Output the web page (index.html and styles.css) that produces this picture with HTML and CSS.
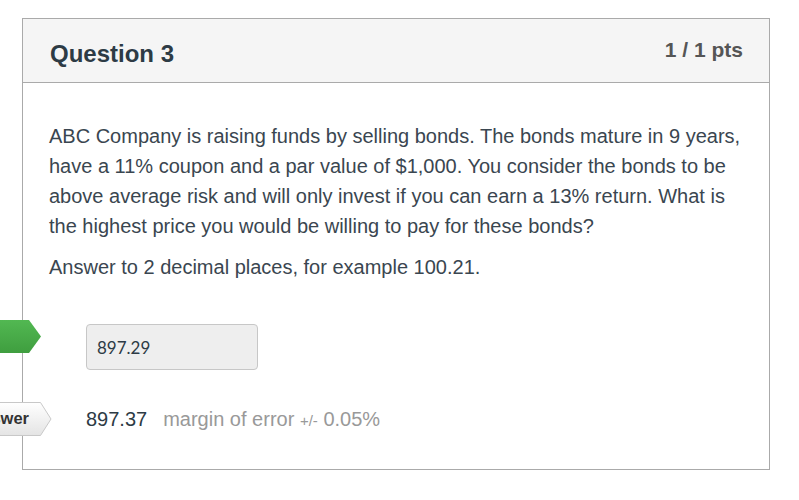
FILE: index.html
```html
<!DOCTYPE html>
<html>
<head>
<meta charset="utf-8">
<link rel="stylesheet" href="styles.css">
</head>
<body>
<div class="card">
  <div class="card-header">
    <h2 class="title">Question 3</h2>
    <div class="pts">1 / 1 pts</div>
  </div>
  <div class="card-body">
    <p class="q">ABC Company is raising funds by selling bonds. The bonds mature in 9 years, have a 11% coupon and a par value of $1,000. You consider the bonds to be above average risk and will only invest if you can earn a 13% return. What is the highest price you would be willing to pay for these bonds?</p>
    <p class="q">Answer to 2 decimal places, for example 100.21.</p>
    <div class="answers">
      <div class="answer-row user">
        <span class="flag flag-green"></span>
        <div class="answer-input">897.29</div>
      </div>
      <div class="answer-row correct">
        <span class="flag flag-grey">
          <svg class="flag-bg" width="52" height="34" viewBox="0 0 52 34">
            <defs>
              <linearGradient id="gg" x1="0" y1="0" x2="0" y2="1">
                <stop offset="0" stop-color="#ffffff"/>
                <stop offset="1" stop-color="#e4e4e4"/>
              </linearGradient>
            </defs>
            <polygon points="-2,0.5 40.5,0.5 51,17 40.5,33.5 -2,33.5" fill="url(#gg)" stroke="#c8c8c8" stroke-width="1"/>
          </svg>
          <span class="flag-text">Correct Answer</span>
        </span>
        <span class="val">897.37</span>
        <span class="moe">margin of error <span class="pm">+/-</span> 0.05%</span>
      </div>
    </div>
  </div>
</div>
</body>
</html>
```
FILE: styles.css
```css
html, body {
  margin: 0;
  padding: 0;
  background: #ffffff;
}
body {
  font-family: "Liberation Sans", Arial, sans-serif;
  color: #2d3b45;
}
.card {
  margin: 18px 0 0 22px;
  width: 746px;
  height: 450px;
  border: 1px solid #aaaaaa;
  position: relative;
}
.card-header {
  height: 63px;
  background: #f5f5f5;
  border-bottom: 1px solid #aaaaaa;
  display: flex;
  justify-content: space-between;
  align-items: flex-start;
  padding: 0 26px 0 27px;
}
.title {
  margin: 0;
  padding-top: 22px;
  font-size: 24px;
  font-weight: bold;
  line-height: 26px;
  color: #2d3b45;
}
.pts {
  padding-top: 19px;
  font-size: 21px;
  font-weight: bold;
  line-height: 24px;
  color: #555555;
}
.card-body {
  padding: 38px 26px 0 26px;
}
.q {
  margin: 0 0 11px 0;
  font-size: 20px;
  line-height: 30px;
  color: #3a4650;
}
.answers {
  margin-top: 42px;
}
.answer-row {
  position: relative;
  display: flex;
  align-items: center;
  padding-left: 37px;
}
.answer-row.user {
  height: 46px;
}
.answer-row.correct {
  margin-top: 32px;
  height: 34px;
  gap: 16px;
}
.answer-input {
  box-sizing: border-box;
  width: 172px;
  height: 46px;
  background: #eeeeee;
  border: 1px solid #c7c7c7;
  border-radius: 4px;
  display: flex;
  align-items: center;
  padding-left: 10px;
  font-family: Lato, sans-serif;
  font-size: 17px;
  color: #2d3b45;
}
.flag {
  position: absolute;
}
.flag-green {
  left: -49px;
  top: -4px;
  width: 41px;
  height: 33px;
  background: linear-gradient(#52b852, #3f9e3f);
  clip-path: polygon(0 0, 29px 0, 41px 16.5px, 29px 33px, 0 33px);
}
.flag-grey {
  left: -49px;
  top: 0;
  width: 52px;
  height: 34px;
  overflow: hidden;
}
.flag-bg {
  position: absolute;
  left: 0;
  top: 0;
  display: block;
}
.flag-text {
  position: absolute;
  right: 23px;
  top: 7px;
  font-size: 16.5px;
  font-weight: bold;
  line-height: 18px;
  white-space: nowrap;
  color: #333333;
}
.val {
  font-size: 20px;
  color: #2d3b45;
}
.moe {
  font-size: 20px;
  color: #999999;
}
.pm {
  font-size: 15px;
}
```
